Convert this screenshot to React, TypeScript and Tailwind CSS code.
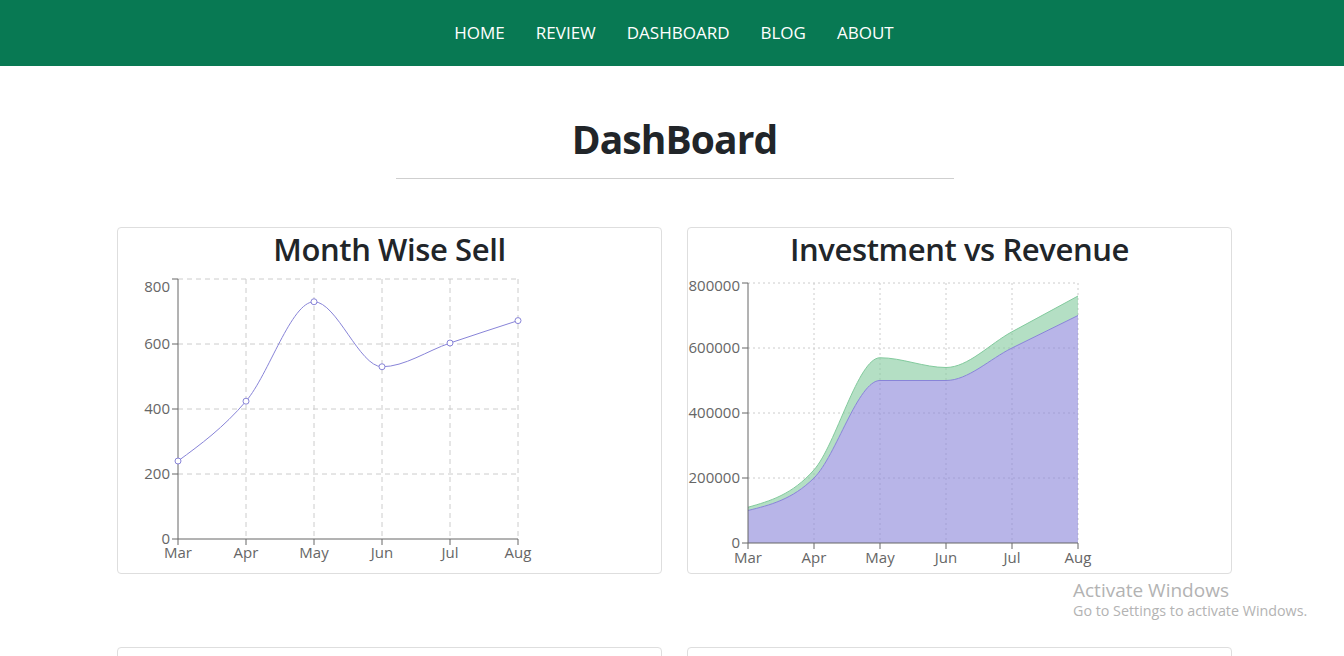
type Pt = [number, number];

const months = ['Mar', 'Apr', 'May', 'Jun', 'Jul', 'Aug'];

// d3-style monotoneX curve, returns cubic segments
function monoSegments(pts: Pt[]) {
  const n = pts.length;
  const sl: number[] = [];
  for (let i = 0; i < n - 1; i++) {
    sl.push((pts[i + 1][1] - pts[i][1]) / (pts[i + 1][0] - pts[i][0]));
  }
  const t: number[] = new Array(n).fill(0);
  for (let i = 1; i < n - 1; i++) {
    const h0 = pts[i][0] - pts[i - 1][0];
    const h1 = pts[i + 1][0] - pts[i][0];
    const s0 = sl[i - 1];
    const s1 = sl[i];
    const p = (s0 * h1 + s1 * h0) / (h0 + h1);
    t[i] = (Math.sign(s0) + Math.sign(s1)) * Math.min(Math.abs(s0), Math.abs(s1), 0.5 * Math.abs(p)) || 0;
  }
  t[0] = (3 * sl[0] - t[1]) / 2;
  t[n - 1] = (3 * sl[n - 2] - t[n - 2]) / 2;
  const segs: { a: Pt; c1: Pt; c2: Pt; b: Pt }[] = [];
  for (let i = 0; i < n - 1; i++) {
    const [x0, y0] = pts[i];
    const [x1, y1] = pts[i + 1];
    const dx = (x1 - x0) / 3;
    segs.push({ a: pts[i], c1: [x0 + dx, y0 + dx * t[i]], c2: [x1 - dx, y1 - dx * t[i + 1]], b: pts[i + 1] });
  }
  return segs;
}

function curve(pts: Pt[]) {
  const s = monoSegments(pts);
  return `M${pts[0][0]},${pts[0][1]}` + s.map((g) => `C${g.c1[0]},${g.c1[1]} ${g.c2[0]},${g.c2[1]} ${g.b[0]},${g.b[1]}`).join('');
}

function curveBack(pts: Pt[]) {
  const s = monoSegments(pts).reverse();
  return s.map((g) => `C${g.c2[0]},${g.c2[1]} ${g.c1[0]},${g.c1[1]} ${g.a[0]},${g.a[1]}`).join('');
}

function SellChart() {
  const sells = [240, 424, 730, 530, 603, 672];
  const xs = months.map((_, i) => 60 + i * 68);
  const y = (v: number) => 269 - (v / 800) * 260;
  const pts: Pt[] = sells.map((v, i) => [xs[i], y(v)]);
  const ticks = [0, 200, 400, 600, 800];

  return (
    <svg width="460" height="300" className="block" style={{ fontFamily: "'Open Sans', 'Noto Sans', sans-serif" }}>
      {ticks.slice(1).map((v) => (
        <line key={v} x1={60} x2={400} y1={y(v)} y2={y(v)} stroke="#ccc" strokeDasharray="5 4" />
      ))}
      {xs.slice(1).map((x) => (
        <line key={x} x1={x} x2={x} y1={9} y2={269} stroke="#ccc" strokeDasharray="5 4" />
      ))}
      <line x1={60} x2={60} y1={9} y2={269} stroke="#666" />
      <line x1={60} x2={400} y1={269} y2={269} stroke="#666" />
      {ticks.map((v) => (
        <g key={v}>
          <line x1={54} x2={60} y1={y(v)} y2={y(v)} stroke="#666" />
          <text x={52} y={v === 800 ? 22 : y(v) + 5} textAnchor="end" fontSize="15" fill="#666">
            {v}
          </text>
        </g>
      ))}
      {xs.map((x, i) => (
        <g key={x}>
          <line x1={x} x2={x} y1={269} y2={275} stroke="#666" />
          <text x={x} y={288} textAnchor="middle" fontSize="15" fill="#666">
            {months[i]}
          </text>
        </g>
      ))}
      <path d={curve(pts)} fill="none" stroke="#8884d8" strokeWidth="1" />
      {pts.map(([cx, cy]) => (
        <circle key={cx} cx={cx} cy={cy} r={3} fill="#fff" stroke="#8884d8" />
      ))}
    </svg>
  );
}

function RevenueChart() {
  const invest = [100000, 200000, 500000, 500000, 600000, 700000];
  const total = [110000, 225000, 570000, 540000, 650000, 760000];
  const xs = months.map((_, i) => 60 + i * 66);
  const y = (v: number) => 273 - (v / 800000) * 260;
  const ip: Pt[] = invest.map((v, i) => [xs[i], y(v)]);
  const tp: Pt[] = total.map((v, i) => [xs[i], y(v)]);
  const ticks = [0, 200000, 400000, 600000, 800000];

  return (
    <svg width="460" height="300" className="block" style={{ fontFamily: "'Open Sans', 'Noto Sans', sans-serif" }}>
      {ticks.slice(1).map((v) => (
        <line key={v} x1={60} x2={390} y1={y(v)} y2={y(v)} stroke="#ccc" strokeDasharray="2 3" />
      ))}
      {xs.slice(1).map((x) => (
        <line key={x} x1={x} x2={x} y1={13} y2={273} stroke="#ccc" strokeDasharray="2 3" />
      ))}
      <path d={curve(tp) + `L${ip[5][0]},${ip[5][1]}` + curveBack(ip) + 'Z'} fill="#82ca9d" fillOpacity="0.6" />
      <path d={curve(tp)} fill="none" stroke="#82ca9d" />
      <path d={curve(ip) + `L390,273L60,273Z`} fill="#8884d8" fillOpacity="0.6" />
      <path d={curve(ip)} fill="none" stroke="#8884d8" />
      <line x1={60} x2={60} y1={13} y2={273} stroke="#666" />
      <line x1={60} x2={390} y1={273} y2={273} stroke="#666" />
      {ticks.map((v) => (
        <g key={v}>
          <line x1={54} x2={60} y1={y(v)} y2={y(v)} stroke="#666" />
          <text x={52} y={v === 800000 ? 21 : y(v) + 5} textAnchor="end" fontSize="15" fill="#666">
            {v}
          </text>
        </g>
      ))}
      {xs.map((x, i) => (
        <g key={x}>
          <line x1={x} x2={x} y1={273} y2={279} stroke="#666" />
          <text x={x} y={293} textAnchor="middle" fontSize="15" fill="#666">
            {months[i]}
          </text>
        </g>
      ))}
    </svg>
  );
}

function Card({ title, children }: { title?: string; children?: React.ReactNode }) {
  return (
    <div className="h-[347px] border border-[#dedede] rounded-[4px] bg-white overflow-hidden">
      {title && (
        <h2 className="h-[42px] leading-[42px] text-center text-[31px] font-semibold text-[#212529] tracking-[-0.4px]">
          {title}
        </h2>
      )}
      {children}
    </div>
  );
}

export default function App() {
  const links = ['HOME', 'REVIEW', 'DASHBOARD', 'BLOG', 'ABOUT'];

  return (
    <div className="relative min-h-screen bg-white font-['Open_Sans','Noto_Sans',sans-serif]">
      <nav className="h-[66px] bg-[#087953] flex items-center justify-center gap-[31px] pl-[4px]">
        {links.map((l) => (
          <a key={l} href="#" className="text-white text-[17px]">
            {l}
          </a>
        ))}
      </nav>

      <main className="w-[1115px] ml-[117px]">
        <h1 className="pt-[44px] text-center text-[39px] leading-[58px] font-bold text-[#212529] tracking-[-0.9px]">
          DashBoard
        </h1>
        <hr className="w-[558px] mx-auto mt-[10px] border-t border-[#cfcfcf]" />

        <div className="grid grid-cols-2 gap-x-[25px] gap-y-[73px] mt-[48px]">
          <Card title="Month Wise Sell">
            <SellChart />
          </Card>
          <Card title="Investment vs Revenue">
            <RevenueChart />
          </Card>
          <Card />
          <Card />
        </div>
      </main>

      <div className="absolute left-[1073px] top-[578px] text-[#b3b3b3] pointer-events-none">
        <div className="text-[19px] leading-[24px]">Activate Windows</div>
        <div className="text-[14.3px] leading-[18px]">Go to Settings to activate Windows.</div>
      </div>
    </div>
  );
}
